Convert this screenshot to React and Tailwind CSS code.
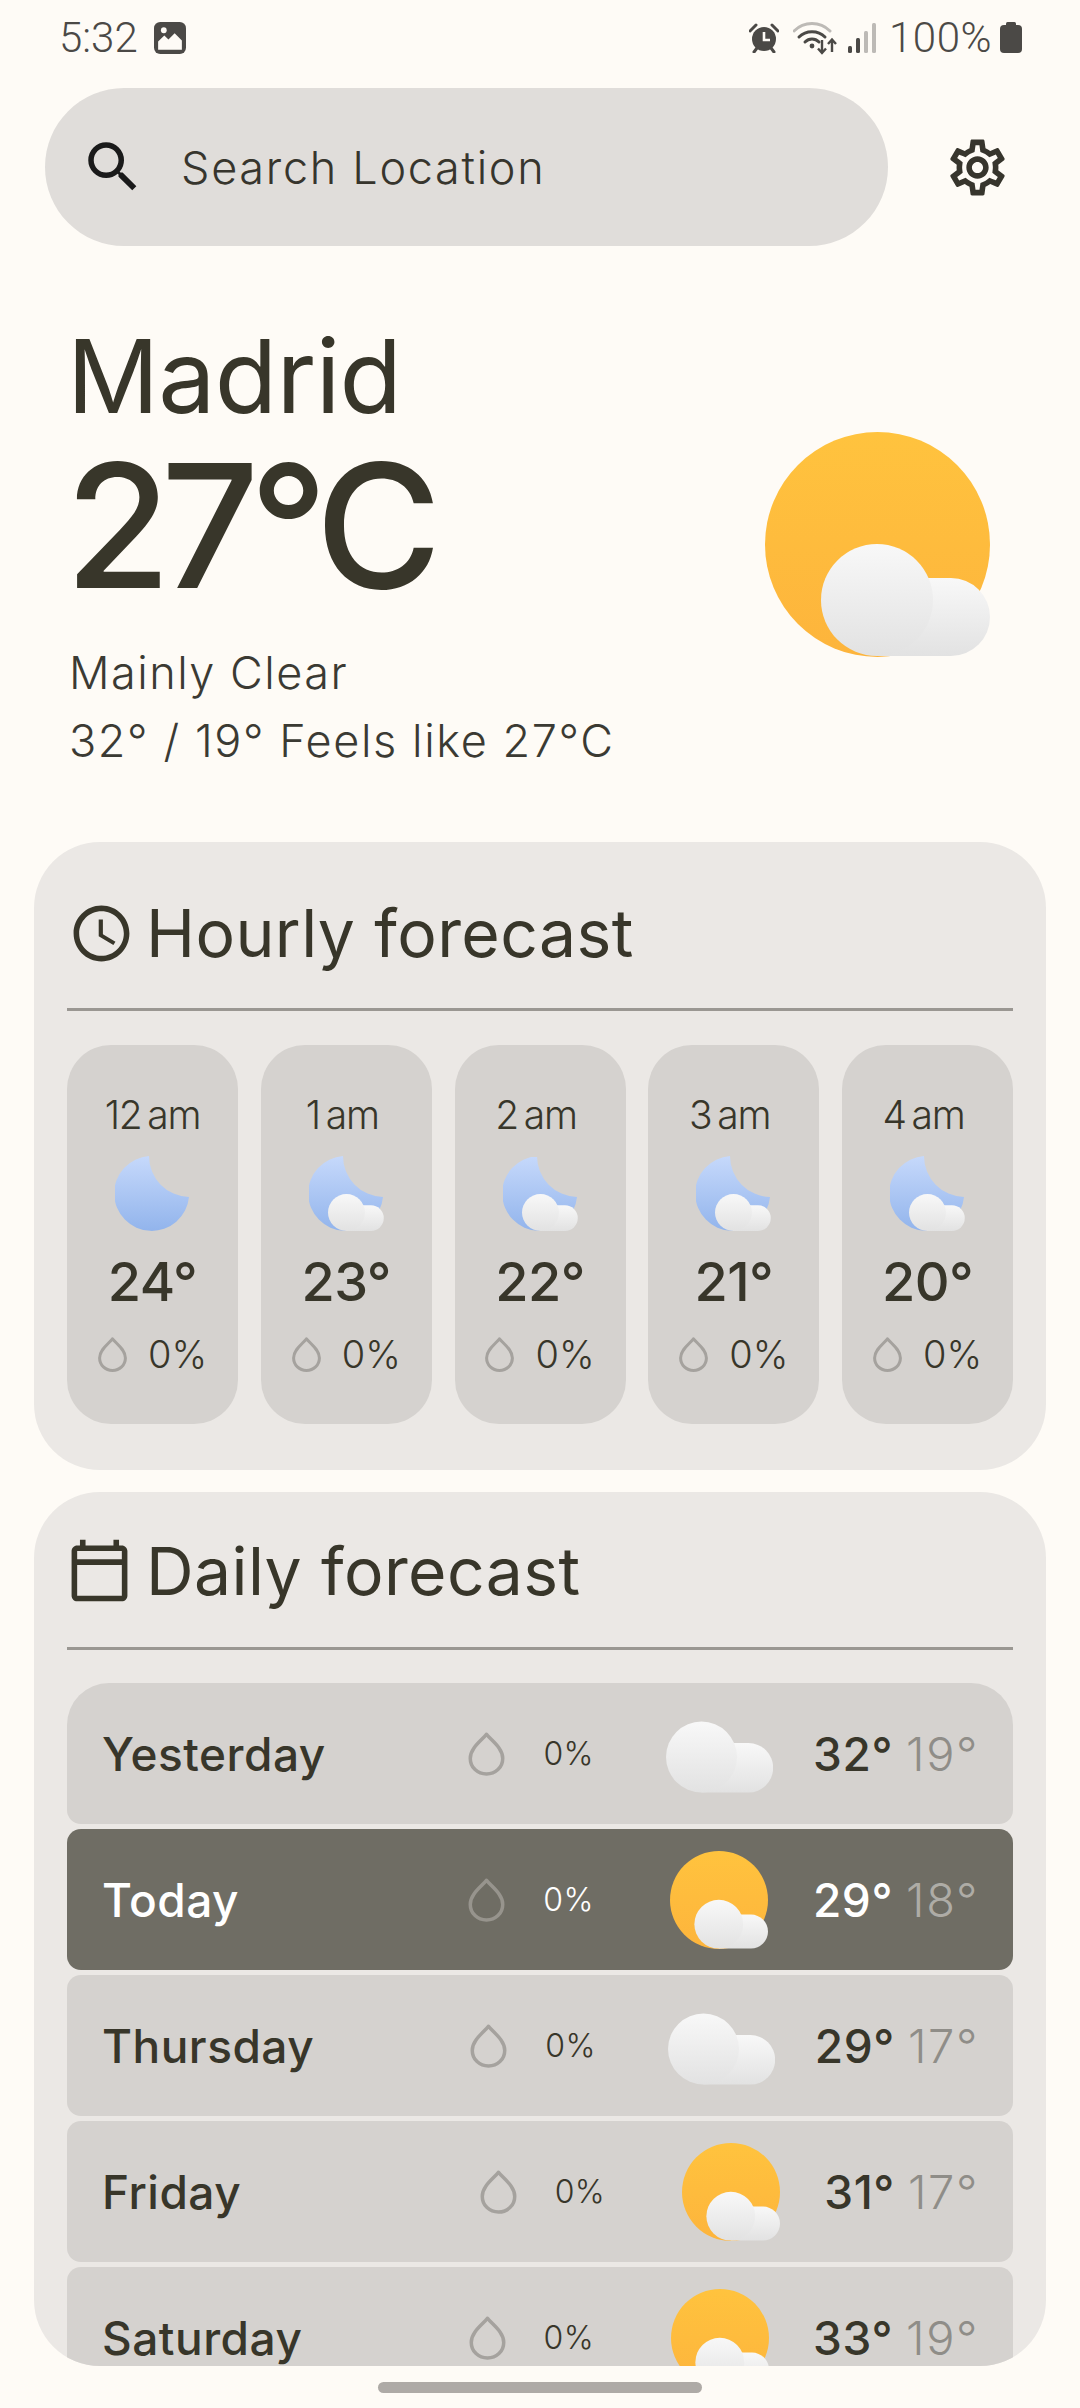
import React from "react";
import { MdOutlineSettings, MdSearch, MdOutlineSchedule, MdOutlineCalendarToday } from "react-icons/md";

const Defs = () => (
  <defs>
    <linearGradient id="sunG" x1="0" y1="0" x2="0" y2="1">
      <stop offset="0" stopColor="#ffc33e" />
      <stop offset="1" stopColor="#fdb43c" />
    </linearGradient>
    <linearGradient id="moonG" x1="0" y1="0" x2="0" y2="1">
      <stop offset="0" stopColor="#c6d9fb" />
      <stop offset="1" stopColor="#92b4ec" />
    </linearGradient>
    <linearGradient id="cloudG" x1="0" y1="0" x2="0" y2="1">
      <stop offset="0" stopColor="#f8f8f8" />
      <stop offset="1" stopColor="#e2e2e2" />
    </linearGradient>
  </defs>
);

// Cloud drawn in a 169 x 112 local box: big puff left, small puff right, flat bottom
const CloudShape = () => (
  <>
    <path d="M56 112 H130 A39 39 0 0 0 130 34 H60 Z" fill="url(#cloudG)" />
    <circle cx="56" cy="56" r="56" fill="url(#cloudG)" />
  </>
);

const SunCloud = ({ size }) => (
  <svg width={size} height={size} viewBox="0 0 225 225" className="block shrink-0">
    <Defs />
    <circle cx="112.5" cy="112.5" r="112.5" fill="url(#sunG)" />
    <g transform="translate(56 112)">
      <CloudShape />
    </g>
  </svg>
);

const Moon = ({ cloud }) => (
  <svg width="75" height="75" viewBox="0 0 75 75" className="block shrink-0">
    <Defs />
    <path d="M34 0 A37.5 37.5 0 1 0 74 41 A41 41 0 0 1 34 0 Z" fill="url(#moonG)" />
    {cloud && (
      <g transform="translate(19 38) scale(0.33)">
        <CloudShape />
      </g>
    )}
  </svg>
);

const CloudOnly = () => (
  <svg width="107" height="99" viewBox="0 0 107 99" className="block shrink-0">
    <Defs />
    <g transform="translate(0 17.5) scale(0.634)">
      <CloudShape />
    </g>
  </svg>
);

const Drop = ({ w, h, sw, color }) => (
  <svg width={w} height={h} viewBox="0 0 29 35" className="block shrink-0" fill="none">
    <path
      d="M14.5 1.8 C11 6.5 1.6 12.5 1.6 21 C1.6 28.2 7.4 33.4 14.5 33.4 C21.6 33.4 27.4 28.2 27.4 21 C27.4 12.5 18 6.5 14.5 1.8 Z"
      stroke={color}
      strokeWidth={sw}
      strokeLinejoin="round"
    />
  </svg>
);

const StatusBar = () => (
  <div className="h-[88px] flex items-start justify-between pl-[59px] pr-[58px] pt-[13px] text-[#4b4946] font-['Roboto',sans-serif] text-[42px] leading-[49px] font-light shrink-0">
    <div className="flex items-center gap-[16px]">
      <span>5:32</span>
      <svg width="32" height="32" viewBox="0 0 31 31" className="block">
        <rect width="31" height="31" rx="6" fill="#4b4946" />
        <path d="M4 27 V19 L10 13 L14 17 L20 11 L27 18 V27 Z" fill="#fefbf6" />
        <circle cx="9.5" cy="8" r="2.8" fill="#fefbf6" />
      </svg>
    </div>
    <div className="flex items-center">
      <svg width="30" height="30" viewBox="0 0 30 30" className="block mr-[14px]">
        <path d="M1 8 L7 2 M29 8 L23 2" stroke="#4b4946" strokeWidth="3" strokeLinecap="round" />
        <circle cx="15" cy="16" r="12" fill="#4b4946" />
        <path d="M15 9 V17 H21" stroke="#fefbf6" strokeWidth="2.6" fill="none" />
        <path d="M5 29 L8 25 M25 29 L22 25" stroke="#4b4946" strokeWidth="3" strokeLinecap="round" />
      </svg>
      <svg width="46" height="34" viewBox="0 0 46 34" className="block mr-[9px]" fill="none">
        <path d="M1 10 C11 0 27 0 37 10" stroke="#bdbab6" strokeWidth="3" strokeLinecap="round" />
        <path d="M6 16 C13 9 25 9 32 16" stroke="#4b4946" strokeWidth="3" strokeLinecap="round" />
        <path d="M12 21 C16 17 22 17 26 21" stroke="#4b4946" strokeWidth="3" strokeLinecap="round" />
        <circle cx="19" cy="25" r="2.4" fill="#4b4946" />
        <path d="M29 19 V32 M25 27.5 L29 32 L33 27.5" stroke="#4b4946" strokeWidth="2.4" />
        <path d="M39 31 V19 M35 23 L39 18.5 L43 23" stroke="#4b4946" strokeWidth="2.4" />
      </svg>
      <svg width="28" height="30" viewBox="0 0 28 30" className="block mr-[13px]">
        <rect x="0" y="23" width="4" height="7" rx="1.5" fill="#4b4946" />
        <rect x="8" y="15" width="4" height="15" rx="1.5" fill="#4b4946" />
        <rect x="16" y="8" width="4" height="22" rx="1.5" fill="#bdbab6" />
        <rect x="24" y="0" width="4" height="30" rx="1.5" fill="#bdbab6" />
      </svg>
      <span className="mr-[8px] tracking-[0.5px]">100%</span>
      <svg width="22" height="31" viewBox="0 0 22 31" className="block">
        <rect x="6" y="0" width="10" height="4" rx="1.5" fill="#4b4946" />
        <rect x="0" y="3" width="22" height="28" rx="4" fill="#4b4946" />
      </svg>
    </div>
  </div>
);

const SearchRow = () => (
  <div className="flex items-center pl-[45px] pr-[69px] shrink-0">
    <div className="w-[843px] h-[158px] rounded-[79px] bg-[#e0ddda] flex items-center pl-[35px]">
      <MdSearch className="text-[#1a1a1a] shrink-0" size={66} />
      <span className="ml-[35px] text-[45px] tracking-[1.7px] font-light text-[#37352d] leading-none">Search Location</span>
    </div>
    <MdOutlineSettings className="ml-auto text-[#37352d]" size={67} />
  </div>
);

const Hero = () => (
  <div className="flex justify-between pl-[67px] pr-[90px] pt-[68px] shrink-0 text-[#38362a]">
    <div className="flex flex-col">
      <div className="text-[102px] leading-[124px] font-normal tracking-[-0.8px]">Madrid</div>
      <div className="text-[172px] leading-[170px] font-[550] mt-[2px] -ml-[2px] tracking-[-10px]">27°C</div>
      <div className="text-[45px] leading-[68px] font-light tracking-[1.5px] mt-[29px] ml-[2px] text-[#3b3a33]">Mainly Clear</div>
      <div className="text-[45px] leading-[68px] font-light tracking-[1.6px] ml-[2px] text-[#3b3a33]">32° / 19° Feels like 27°C</div>
    </div>
    <div className="pt-[118px]">
      <SunCloud size={225} />
    </div>
  </div>
);

const hours = [
  ["12 am", "24°", false, ""],
  ["1 am", "23°", true, "pr-[8px]"],
  ["2 am", "22°", true, "pr-[8px]"],
  ["3 am", "21°", true, "pr-[8px]"],
  ["4 am", "20°", true, "pr-[8px]"],
];

const Tile = ({ t, d, c, cls }) => (
  <div className="w-[171px] h-[379px] rounded-[44px] bg-[#d5d2cf] flex flex-col items-center pt-[46px]">
    <div className={"text-[39px] leading-[48px] font-light tracking-[-1.2px] [word-spacing:-4px] " + cls}>{t}</div>
    <div className="mt-[17px]">
      <Moon cloud={c} />
    </div>
    <div className="mt-[18px] text-[54px] leading-[66px] font-medium tracking-[-0.6px]">{d}</div>
    <div className="mt-[15px] flex items-center gap-[21px] text-[38px] leading-[48px] font-light">
      <Drop w={29} h={35} sw={3} color="#a5a29e" />
      <span>0%</span>
    </div>
  </div>
);

const Hourly = () => (
  <section className="mx-[34px] mt-[67px] h-[628px] rounded-[66px] bg-[#ebe8e5] px-[33px] shrink-0 text-[#38362a]">
    <div className="h-[169px] flex items-center pt-[16px] border-b-[3px] border-[#9a9792]">
      <MdOutlineSchedule size={67} className="shrink-0 ml-[1px]" />
      <span className="ml-[11px] text-[66px] font-normal tracking-[0.4px] leading-none">Hourly forecast</span>
    </div>
    <div className="mt-[34px] flex justify-between">
      {hours.map((h) => (
        <Tile key={h[0]} t={h[0]} d={h[1]} c={h[2]} cls={h[3]} />
      ))}
    </div>
  </section>
);

const days = [
  { n: "Yesterday", hi: "32°", lo: "19°", icon: "cloud", cls: "rounded-t-[42px] rounded-b-[14px]" },
  { n: "Today", hi: "29°", lo: "18°", icon: "sun", active: true, cls: "rounded-[14px]" },
  { n: "Thursday", hi: "29°", lo: "17°", icon: "cloud", cls: "rounded-[14px]" },
  { n: "Friday", hi: "31°", lo: "17°", icon: "sun", cls: "rounded-[14px]" },
  { n: "Saturday", hi: "33°", lo: "19°", icon: "sun", cls: "rounded-t-[14px]" },
];

const Row = ({ n, hi, lo, icon, active, cls }) => (
  <div
    className={
      "h-[141px] shrink-0 flex items-center pl-[35px] pr-[34px] " +
      cls +
      (active ? " bg-[#6f6d64] text-white" : " bg-[#d5d2cf] text-[#38362a]")
    }
  >
    <span className="flex-1 text-[46px] font-medium tracking-[0.5px] leading-none">{n}</span>
    <Drop w={37} h={44} sw={2.8} color={active ? "#97948d" : "#a5a29e"} />
    <span className="ml-[38px] text-[32px] font-light tracking-[0.4px] leading-none">0%</span>
    <div className="ml-[72px] mr-[40px] w-[107px] flex justify-center">
      {icon === "sun" ? <SunCloud size={98} /> : <CloudOnly />}
    </div>
    <span className="text-[46px] font-medium tracking-[0.6px] leading-none">{hi}</span>
    <span className={"ml-[13px] text-[47px] font-light tracking-[1.6px] leading-none " + (active ? "text-[#aeaca6]" : "text-[#8f8d88]")}>{lo}</span>
  </div>
);

const Daily = () => (
  <section className="mx-[34px] mt-[22px] flex-1 min-h-0 rounded-[66px] bg-[#ebe8e5] px-[33px] overflow-hidden text-[#38362a]">
    <div className="h-[158px] flex items-center pt-[2px] border-b-[3px] border-[#9a9792]">
      <MdOutlineCalendarToday size={67} className="shrink-0 ml-[-1px]" />
      <span className="ml-[13px] text-[66px] font-normal tracking-[0.4px] leading-none">Daily forecast</span>
    </div>
    <div className="mt-[33px] flex flex-col gap-[5px]">
      {days.map((d) => (
        <Row key={d.n} {...d} />
      ))}
    </div>
  </section>
);

export default function App() {
  return (
    <div className="w-[1080px] h-[2408px] overflow-hidden bg-[#fefbf6] flex flex-col font-['Inter',sans-serif]">
      <StatusBar />
      <SearchRow />
      <Hero />
      <Hourly />
      <Daily />
      <div className="h-[42px] shrink-0 flex justify-center pt-[16px]">
        <div className="w-[324px] h-[11px] rounded-full bg-[#aeaaa6]" />
      </div>
    </div>
  );
}
